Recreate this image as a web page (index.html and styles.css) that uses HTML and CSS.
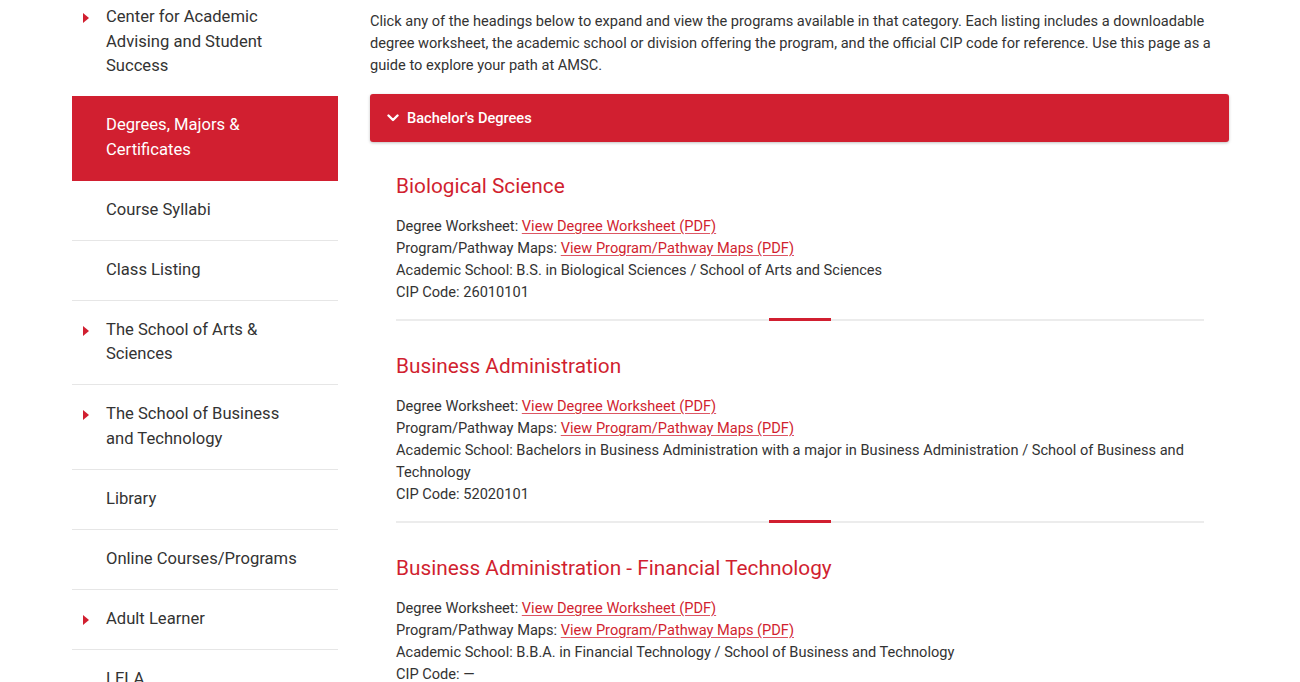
FILE: index.html
```html
<!DOCTYPE html>
<html lang="en">
<head>
<meta charset="utf-8">
<title>Degrees, Majors &amp; Certificates</title>
<link rel="stylesheet" href="styles.css">
</head>
<body>
<div class="page">
  <nav class="sidebar">
    <ul class="nav">
      <li class="nav-item has-sub"><a href="#">Center for Academic Advising and Student Success</a></li>
      <li class="nav-item active"><a href="#">Degrees, Majors &amp; Certificates</a></li>
      <li class="nav-item"><a href="#">Course Syllabi</a></li>
      <li class="nav-item"><a href="#">Class Listing</a></li>
      <li class="nav-item has-sub"><a href="#">The School of Arts &amp; Sciences</a></li>
      <li class="nav-item has-sub"><a href="#">The School of Business and Technology</a></li>
      <li class="nav-item"><a href="#">Library</a></li>
      <li class="nav-item"><a href="#">Online Courses/Programs</a></li>
      <li class="nav-item has-sub"><a href="#">Adult Learner</a></li>
      <li class="nav-item"><a href="#">LELA</a></li>
    </ul>
  </nav>
  <main class="main">
    <p class="intro">Click any of the headings below to expand and view the programs available in that category. Each listing includes a downloadable degree worksheet, the academic school or division offering the program, and the official CIP code for reference. Use this page as a guide to explore your path at AMSC.</p>
    <section class="accordion">
      <button class="acc-head" type="button">
        <svg class="chev" width="12" height="8" viewBox="0 0 12 8"><path d="M1.5 1.5 L6 6 L10.5 1.5" fill="none" stroke="#fff" stroke-width="2.4" stroke-linecap="round" stroke-linejoin="round"/></svg>
        <span>Bachelor's Degrees</span>
      </button>
      <div class="acc-body">
        <article class="program">
          <h3>Biological Science</h3>
          <p>Degree Worksheet: <a href="#">View Degree Worksheet (PDF)</a><br>
          Program/Pathway Maps: <a href="#">View Program/Pathway Maps (PDF)</a><br>
          Academic School: B.S. in Biological Sciences / School of Arts and Sciences<br>
          CIP Code: 26010101</p>
          <div class="sep"></div>
        </article>
        <article class="program">
          <h3>Business Administration</h3>
          <p>Degree Worksheet: <a href="#">View Degree Worksheet (PDF)</a><br>
          Program/Pathway Maps: <a href="#">View Program/Pathway Maps (PDF)</a><br>
          Academic School: Bachelors in Business Administration with a major in Business Administration / School of Business and Technology<br>
          CIP Code: 52020101</p>
          <div class="sep"></div>
        </article>
        <article class="program">
          <h3>Business Administration - Financial Technology</h3>
          <p>Degree Worksheet: <a href="#">View Degree Worksheet (PDF)</a><br>
          Program/Pathway Maps: <a href="#">View Program/Pathway Maps (PDF)</a><br>
          Academic School: B.B.A. in Financial Technology / School of Business and Technology<br>
          CIP Code: —</p>
          <div class="sep"></div>
        </article>
      </div>
    </section>
  </main>
</div>
</body>
</html>
```

FILE: styles.css
```css
html, body {
  margin: 0;
  padding: 0;
  background: #fff;
}
body {
  font-family: Roboto, "Liberation Sans", Arial, sans-serif;
  color: #333;
  overflow: hidden;
}
.page {
  display: flex;
  align-items: flex-start;
  gap: 32px;
  padding-left: 72px;
  padding-right: 71px;
}
.sidebar {
  width: 266px;
  flex: 0 0 266px;
  margin-top: -12px;
}
.nav {
  list-style: none;
  margin: 0;
  padding: 0;
}
.nav-item {
  position: relative;
  border-bottom: 1px solid #e6e6e6;
}
.nav-item a {
  display: block;
  padding: 17.25px 36px 17.25px 34px;
  font-size: 16.6px;
  line-height: 24.5px;
  color: #333;
  text-decoration: none;
}
.nav-item.has-sub::before {
  content: "";
  position: absolute;
  left: 11px;
  top: 25px;
  width: 0;
  height: 0;
  border-top: 5px solid transparent;
  border-bottom: 5px solid transparent;
  border-left: 6px solid #d11f30;
}
.nav-item.active {
  background: #d11f30;
  border-bottom-color: #d11f30;
  margin-top: -1px;
}
.nav-item.active a {
  color: #fff;
}
.main {
  flex: 1;
  min-width: 0;
  padding-top: 10px;
}
.intro {
  margin: 0;
  font-size: 14.6px;
  line-height: 22px;
  color: #333;
}
.accordion {
  margin-top: 18px;
}
.acc-head {
  display: flex;
  align-items: center;
  gap: 8px;
  width: 100%;
  height: 48px;
  padding: 0 0 0 17px;
  border: 0;
  border-radius: 3px;
  background: #d11f30;
  color: #fff;
  font-family: inherit;
  font-size: 14.6px;
  font-weight: 500;
  box-shadow: 0 1px 3px rgba(0,0,0,0.25);
  text-align: left;
}
.chev {
  display: block;
}
.acc-body {
  padding: 30px 25px 0 26px;
}
.program h3 {
  margin: 0;
  font-size: 20.8px;
  line-height: 28px;
  font-weight: 400;
  color: #d11f30;
}
.program p {
  margin: 15px 0 0;
  font-size: 14.6px;
  line-height: 22px;
  color: #333;
}
.program a {
  color: #d11f30;
  text-decoration: underline;
  text-decoration-color: rgba(209,31,48,0.75);
  text-underline-offset: 2px;
}
.sep {
  position: relative;
  height: 2px;
  background: #ececec;
  margin: 16px 0 31px;
}
.sep::after {
  content: "";
  position: absolute;
  left: 50%;
  top: -1px;
  width: 62px;
  height: 3px;
  margin-left: -31px;
  background: #d11f30;
}
```
